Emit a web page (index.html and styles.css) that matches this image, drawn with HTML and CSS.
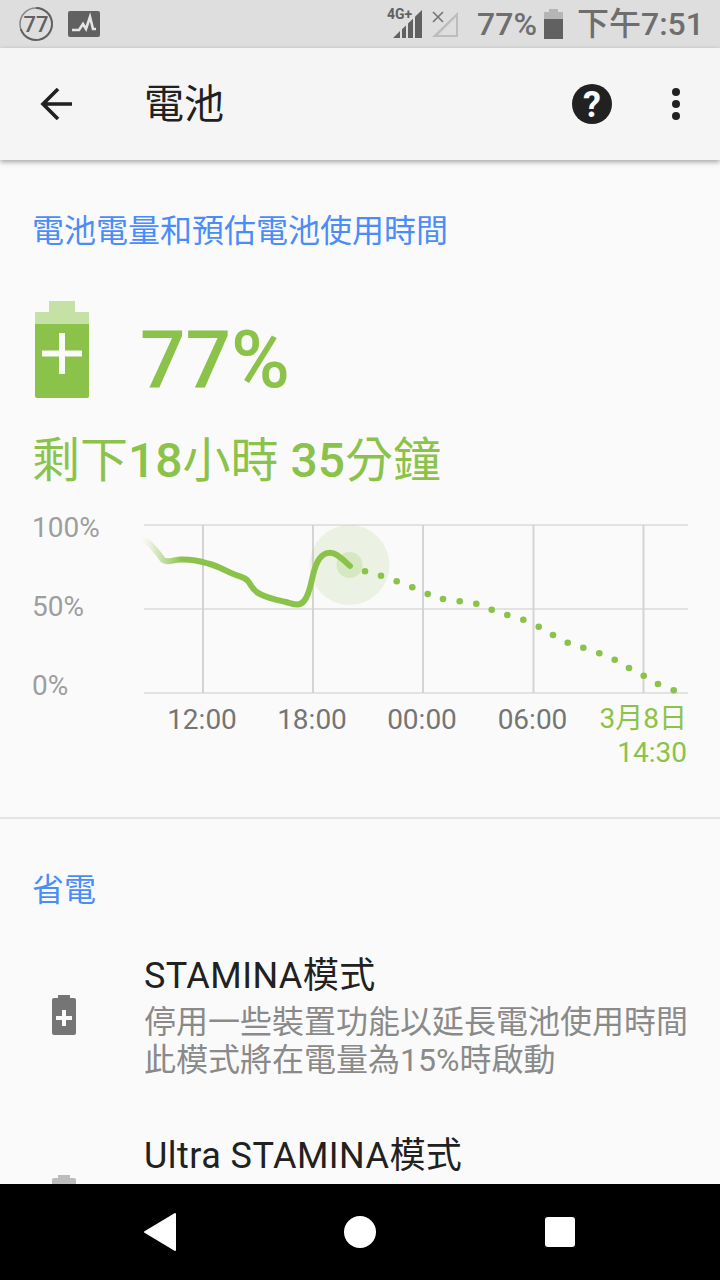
FILE: index.html
```html
<!DOCTYPE html>
<html lang="zh-Hant">
<head>
<meta charset="utf-8">
<title>電池</title>
<link rel="stylesheet" href="styles.css">
</head>
<body>
<div class="phone">
  <header class="status">
    <div class="status-left">
      <svg class="ic-ring" width="36" height="36" viewBox="0 0 36 36">
        <circle cx="18" cy="18" r="16" fill="none" stroke="#8a8a8a" stroke-width="1.6"/>
        <path d="M18 2A16 16 0 1 1 2.800 23" fill="none" stroke="#616161" stroke-width="2"/>
        <text x="18" y="25.500" text-anchor="middle" class="ring-text">77</text>
      </svg>
      <svg width="32" height="26" viewBox="0 0 32 26">
        <rect width="32" height="26" rx="2" fill="#616161"/>
        <path d="M4 19H11L15 13L18 18L22 6L25 18H28" fill="none" stroke="#e6e6e6" stroke-width="2.600"/>
      </svg>
    </div>
    <div class="status-right">
      <svg class="ic-signal" width="36" height="32" viewBox="0 0 36 32">
        <text x="0" y="11" class="net-text">4G+</text>
        <path d="M6 30L13 23V30ZM15 30V21.300L19 17.400V30ZM21 30V15.500L26 10.700V30ZM28 30V8.800L35 2V30Z" fill="#616161"/>
      </svg>
      <svg class="ic-sim" width="30" height="30" viewBox="0 0 30 30">
        <path d="M2 28L28 3V28ZM8 26H26V8Z" fill="#bdbdbd" fill-rule="evenodd"/>
        <path d="M3 3L13 13M13 3L3 13" stroke="#757575" stroke-width="1.600"/>
      </svg>
      <span class="st-pct">77%</span>
      <svg class="ic-batt" width="19" height="30" viewBox="0 0 19 30">
        <path d="M5 0H14V3H19V10H0V3H5Z" fill="#b5b5b5"/>
        <path d="M0 10H19V30H0Z" fill="#616161"/>
      </svg>
      <span class="st-time">下午7:51</span>
    </div>
  </header>

  <div class="appbar">
    <svg class="ic-back" width="34" height="32" viewBox="0 0 34 32">
      <path d="M32 16H4M18 1L3 16L18 31" fill="none" stroke="#212121" stroke-width="3.600"/>
    </svg>
    <h1 class="title">電池</h1>
    <svg class="ic-help" width="40" height="40" viewBox="0 0 40 40">
      <circle cx="20" cy="20" r="20" fill="#212121"/>
      <text x="20" y="33" text-anchor="middle" class="help-text">?</text>
    </svg>
    <svg class="ic-more" width="8" height="32" viewBox="0 0 8 32">
      <circle cx="4" cy="4" r="4" fill="#212121"/>
      <circle cx="4" cy="16" r="4" fill="#212121"/>
      <circle cx="4" cy="28" r="4" fill="#212121"/>
    </svg>
  </div>

  <main class="content">
    <section class="summary">
      <h2 class="section-head">電池電量和預估電池使用時間</h2>
      <div class="level">
        <svg class="ic-level" width="54" height="97" viewBox="0 0 54 97">
          <path d="M14 0H40V11H53Q54 11 54 12V23H0V12Q0 11 1 11H14Z" fill="#c5e1a5"/>
          <path d="M0 23H54V95Q54 97 52 97H2Q0 97 0 95Z" fill="#8bc34a"/>
          <path d="M24 32H30V49.500H47V55.500H30V73H24V55.500H7V49.500H24Z" fill="#fafafa"/>
        </svg>
        <div class="pct">77%</div>
      </div>
      <p class="remain">剩下<b>18</b>小時 <b>35</b>分鐘</p>
    </section>

    <svg class="chart" width="720" height="260" viewBox="0 510 720 260">
      <defs>
        <linearGradient id="fade" gradientUnits="userSpaceOnUse" x1="146" y1="0" x2="182" y2="0">
          <stop offset="0" stop-color="#8bc34a" stop-opacity="0.05"/>
          <stop offset="1" stop-color="#8bc34a"/>
        </linearGradient>
      </defs>
      <g class="grid-h">
        <line x1="144" y1="525" x2="688" y2="525"/>
        <line x1="144" y1="609" x2="688" y2="609"/>
        <line x1="144" y1="693" x2="688" y2="693"/>
      </g>
      <g class="grid-v">
        <line x1="203" y1="525" x2="203" y2="693"/>
        <line x1="313" y1="525" x2="313" y2="693"/>
        <line x1="423" y1="525" x2="423" y2="693"/>
        <line x1="533.500" y1="525" x2="533.500" y2="693"/>
        <line x1="643.500" y1="525" x2="643.500" y2="693"/>
      </g>
      <circle cx="349.500" cy="565" r="40" fill="#8bc34a" fill-opacity="0.13"/>
      <circle cx="349.500" cy="565" r="13" fill="#8bc34a" fill-opacity="0.22"/>
      <path class="curve" stroke="url(#fade)" d="M146 541C153 546 158 553 163 560C168 563 172 560 180 559.500C190 559 200 561 208 563.500C218 566 226 571 236 575C241 577 245 577 248 581C252 586 252 590 260 594C270 599 277 600 286 602C294 604 299 607 304 601C312 592 311 573 318 561C323 552 331 551 337 555C343 559 346 562 350 566"/>
      <g fill="#8bc34a">
        <circle cx="365" cy="571.300" r="3.300"/><circle cx="381" cy="575.700" r="3.300"/><circle cx="396.700" cy="581.300" r="3.300"/>
        <circle cx="412.300" cy="587.300" r="3.300"/><circle cx="427.700" cy="594" r="3.300"/><circle cx="443" cy="599" r="3.300"/>
        <circle cx="459.700" cy="601.300" r="3.300"/><circle cx="476.300" cy="603.700" r="3.300"/><circle cx="491.700" cy="609.700" r="3.300"/>
        <circle cx="507.300" cy="615" r="3.300"/><circle cx="523.300" cy="619.700" r="3.300"/><circle cx="538.700" cy="626.700" r="3.300"/>
        <circle cx="553" cy="635" r="3.300"/><circle cx="567.700" cy="642.700" r="3.300"/><circle cx="583.300" cy="647.700" r="3.300"/>
        <circle cx="599.300" cy="653.300" r="3.300"/><circle cx="614.700" cy="659.700" r="3.300"/><circle cx="629" cy="668" r="3.300"/>
        <circle cx="643.700" cy="675.700" r="3.300"/><circle cx="658" cy="684" r="3.300"/><circle cx="673.700" cy="690.300" r="3.300"/>
      </g>
      <g class="axis-y">
        <text x="32" y="537">100%</text>
        <text x="32" y="616">50%</text>
        <text x="32" y="695">0%</text>
      </g>
      <g class="axis-x">
        <text x="202" y="729">12:00</text>
        <text x="312" y="729">18:00</text>
        <text x="422" y="729">00:00</text>
        <text x="532.500" y="729">06:00</text>
      </g>
      <g class="axis-end">
        <text x="687" y="728">3月8日</text>
        <text x="687" y="762">14:30</text>
      </g>
    </svg>

    <hr class="divider">

    <section class="saving">
      <h2 class="section-head">省電</h2>
      <div class="row">
        <svg class="row-icon" width="24" height="40" viewBox="0 0 24 40">
          <path d="M6 0H18V3H22Q24 3 24 5V38Q24 40 22 40H2Q0 40 0 38V5Q0 3 2 3H6Z" fill="#757575"/>
          <path d="M10 15H14V21H20V25H14V31H10V25H4V21H10Z" fill="#fafafa"/>
        </svg>
        <div class="row-text">
          <div class="row-title">STAMINA模式</div>
          <div class="row-sub">停用一些裝置功能以延長電池使用時間<br>此模式將在電量為15%時啟動</div>
        </div>
      </div>
      <div class="row">
        <svg class="row-icon row-icon-off" width="24" height="40" viewBox="0 0 24 40">
          <path d="M6 0H18V3H22Q24 3 24 5V38Q24 40 22 40H2Q0 40 0 38V5Q0 3 2 3H6Z" fill="#bdbdbd"/>
        </svg>
        <div class="row-text">
          <div class="row-title">Ultra STAMINA模式</div>
        </div>
      </div>
    </section>
  </main>

  <nav class="navbar">
    <svg class="nav-back" width="34" height="40" viewBox="0 0 34 40">
      <path d="M32 2V38L2 20Z" fill="#fff" stroke="#fff" stroke-width="2" stroke-linejoin="round"/>
    </svg>
    <span class="nav-home"></span>
    <span class="nav-recent"></span>
  </nav>
</div>
</body>
</html>
```
FILE: styles.css
```css
* { box-sizing: border-box; }
html, body { margin: 0; padding: 0; }
body {
  width: 720px;
  height: 1280px;
  overflow: hidden;
  font-family: Roboto, "Noto Sans CJK TC", sans-serif;
  background: #fafafa;
}
.phone {
  width: 720px;
  height: 1280px;
  display: flex;
  flex-direction: column;
}

/* status bar */
.status {
  height: 48px;
  flex: none;
  background: #dedede;
  display: flex;
  align-items: center;
  justify-content: space-between;
  padding: 0 16px 0 18px;
  color: #6e6e6e;
}
.status-left { display: flex; align-items: center; gap: 14px; }
.status-right { display: flex; align-items: center; }
.ic-signal, .ic-help { overflow: visible; }
.ring-text { font: 500 22px Roboto, sans-serif; fill: #616161; }
.net-text { font: 700 14px Roboto, sans-serif; fill: #616161; }
.ic-sim { margin-left: 7px; }
.st-pct { font-size: 32px; font-weight: 500; margin-left: 17px; line-height: 48px; }
.ic-batt { margin-left: 7px; }
.st-time { font-size: 32px; font-weight: 500; margin-left: 14px; line-height: 48px; }

/* app bar */
.appbar {
  height: 112px;
  flex: none;
  background: #f5f5f5;
  display: flex;
  align-items: center;
  box-shadow: 0 2px 5px rgba(0, 0, 0, 0.35);
  position: relative;
  z-index: 1;
  padding: 0 40px;
}
.title {
  margin: 2px 0 0 70px;
  flex: 1;
  font-size: 40px;
  font-weight: 400;
  line-height: 56px;
  color: #212121;
}
.help-text { font: 700 36px Roboto, sans-serif; fill: #fafafa; }
.ic-more { margin-left: 60px; }

/* content */
.content {
  flex: 1;
  min-height: 0;
  overflow: hidden;
  background: #fafafa;
}
.summary { padding: 49px 32px 0; }
.section-head {
  margin: 0;
  font-size: 32px;
  font-weight: 400;
  line-height: 44px;
  color: #4b8df8;
}
.level {
  display: flex;
  align-items: center;
  margin: 48px 0 0 3px;
  height: 97px;
}
.ic-level { flex: none; }
.pct {
  margin: 21px 0 0 51px;
  font-size: 80px;
  font-weight: 500;
  line-height: 97px;
  color: #8bc34a;
}
.remain {
  margin: 31px 0 0;
  font-size: 48px;
  font-weight: 400;
  line-height: 64px;
  color: #8bc34a;
}
.remain b { font-weight: 500; }

/* chart */
.chart { display: block; margin-top: 17px; }
.grid-h line { stroke: #e2e2e2; stroke-width: 2; }
.grid-v line { stroke: #d4d4d4; stroke-width: 2; }
.curve {
  fill: none;
  stroke-width: 6;
  stroke-linecap: round;
  stroke-linejoin: round;
}
.axis-y text { font: 400 28px Roboto, sans-serif; fill: #9e9e9e; }
.axis-x text { font: 400 28px Roboto, sans-serif; fill: #757575; text-anchor: middle; }
.axis-end text {
  font: 400 28px Roboto, "Noto Sans CJK TC", sans-serif;
  fill: #8bc34a;
  text-anchor: end;
}

.divider {
  border: 0;
  height: 2px;
  margin: 47px 0 0;
  background: #e4e4e4;
}

/* power saving */
.saving { padding: 49px 0 0; }
.saving .section-head { padding-left: 32px; }
.row {
  display: flex;
  height: 180px;
}
.saving .section-head + .row { margin-top: 42px; }
.row-icon { flex: none; margin: 41px 68px 0 52px; }
.row-text { min-width: 0; }
.row-title {
  font-size: 36px;
  line-height: 44px;
  letter-spacing: 0.45px;
  color: #212121;
  white-space: nowrap;
  margin-bottom: 5px;
}
.row-sub {
  font-size: 32px;
  line-height: 38px;
  color: #8a8a8a;
  white-space: nowrap;
}

/* nav bar */
.navbar {
  height: 96px;
  flex: none;
  background: #000;
  position: relative;
  z-index: 2;
  display: grid;
  grid-template-columns: 320px 80px 320px;
  align-items: center;
  justify-items: center;
}
.nav-back { justify-self: start; margin-left: 143px; }
.nav-home {
  width: 32px;
  height: 32px;
  border-radius: 50%;
  background: #fff;
}
.nav-recent {
  justify-self: start;
  margin-left: 145px;
  width: 30px;
  height: 30px;
  border-radius: 3px;
  background: #fff;
}
```
